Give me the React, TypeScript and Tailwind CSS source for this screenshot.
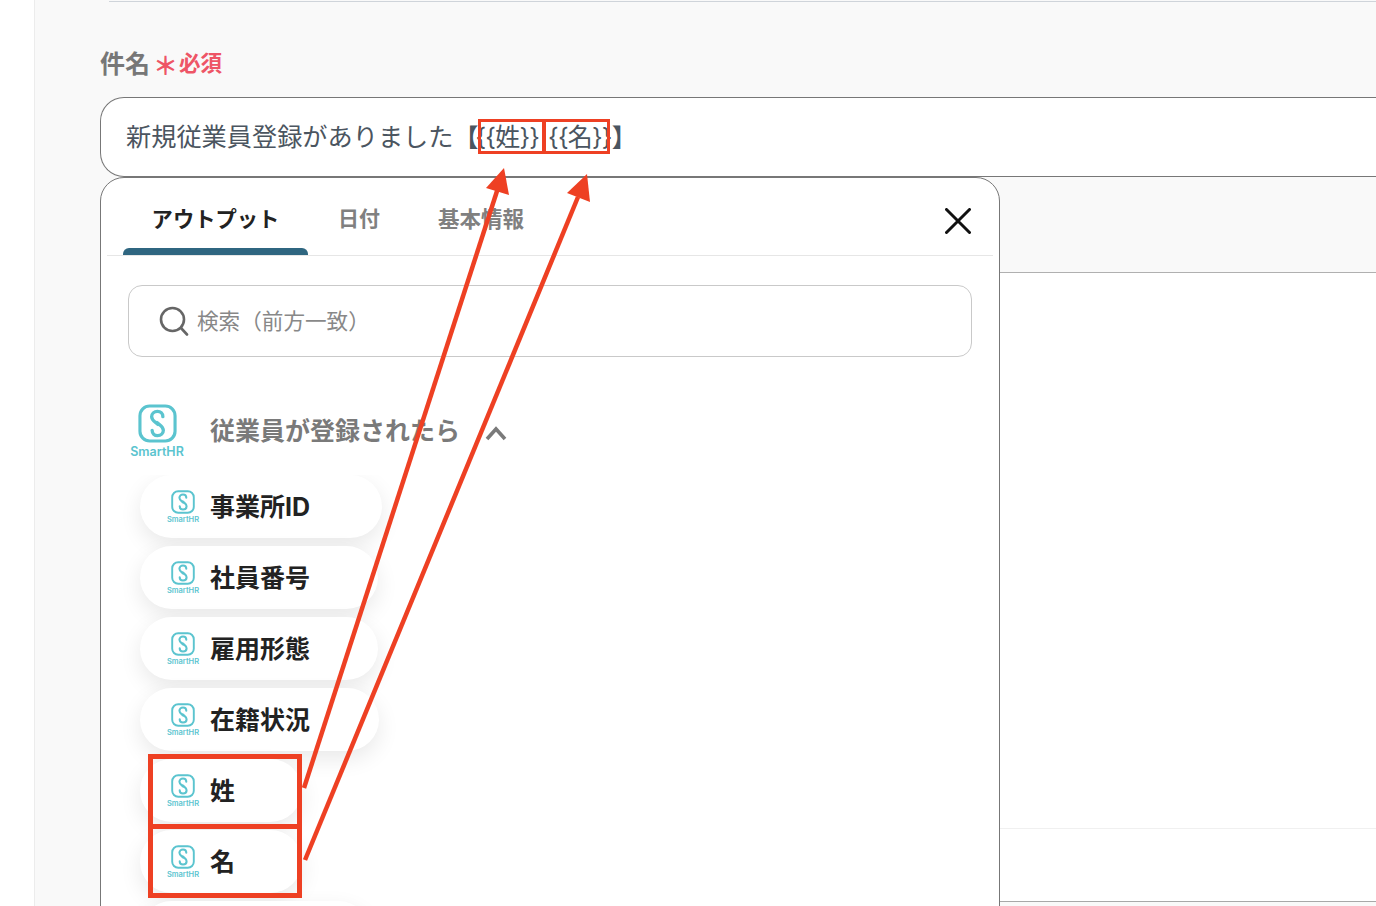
const JP = "font-['Noto_Sans_CJK_JP','Noto_Sans',sans-serif]";

function Logo({ big }: { big?: boolean }) {
  const s = big ? 39 : 24;
  return (
    <div className={big ? "flex w-[54px] flex-col items-center" : "flex w-[34px] flex-col items-center"}>
      <svg width={s} height={s} viewBox="0 0 40 40" fill="none" stroke="#5bc4cf">
        <rect x="2" y="2" width="36" height="36" rx="10" strokeWidth="3.2" />
        <path d="M25.5 13 C25.5 9.5 23 7.5 20 7.5 C16.5 7.5 14 10 14 13 C14 15.5 15.5 17 18 19 L20.5 21" strokeWidth="3.4" strokeLinecap="round" />
        <path d="M14.5 27 C14.5 30.5 17 32.5 20 32.5 C23.5 32.5 26 30 26 27 C26 24.5 24.5 23 22 21 L19.5 19" strokeWidth="3.4" strokeLinecap="round" />
      </svg>
      <span
        className={
          big
            ? "mt-[1px] font-['Inter',sans-serif] text-[12.5px] leading-[15px] font-semibold whitespace-nowrap text-[#5bc4cf]"
            : "mt-[1px] font-['Inter',sans-serif] text-[7.5px] leading-[9px] font-semibold whitespace-nowrap text-[#5bc4cf]"
        }
      >
        SmartHR
      </span>
    </div>
  );
}

function Pill({ label, width }: { label: string; width: string }) {
  return (
    <div
      className={`flex h-[63px] shrink-0 items-center gap-[10px] rounded-[32px] bg-white pl-[26px] shadow-[0_8px_22px_rgba(0,0,0,0.09)] ${width}`}
    >
      <Logo />
      <span className="mt-[1px] font-['Inter','Noto_Sans_CJK_JP',sans-serif] text-[25px] leading-none font-bold text-[#222]">{label}</span>
    </div>
  );
}

export default function App() {
  return (
    <div className={`relative flex h-[906px] w-[1376px] overflow-hidden bg-white ${JP}`}>
      <div className="w-[34px] shrink-0" />
      <main className="flex min-w-0 flex-1 flex-col border-l border-[#ececec] bg-[#f9f9f9] pl-[65px]">
        <div className="ml-[9px] h-[2px] w-[1400px] shrink-0 border-b border-[#cfd4da]" />
        <div className="mt-[42px] flex h-[36px] shrink-0 items-center">
          <span className="text-[25px] leading-none font-bold text-[#777]">件名</span>
          <span className="mt-[5px] ml-[3px] text-[25px] leading-none font-bold text-[#ee5566]">＊</span>
          <span className="ml-[1px] text-[21.5px] leading-none font-bold text-[#ee5566]">必須</span>
        </div>
        <div className="mt-[17px] flex h-[80px] w-[1400px] shrink-0 items-center rounded-l-[24px] border border-r-0 border-[#777] bg-white pb-[2px] pl-[25px] text-[25px] leading-none whitespace-nowrap text-[#4b5560]">
          <span className="text-[25.2px]">新規従業員登録がありました</span>
          <span className="font-bold tracking-[-3px]">【</span>
          <span className="mt-[2px] font-['Inter','Noto_Sans_CJK_JP',sans-serif] tracking-[-0.8px]">{"{{"}姓{"}}"}</span>
          <span className="mt-[2px] ml-[9px] font-['Inter','Noto_Sans_CJK_JP',sans-serif] tracking-[-0.8px]">{"{{"}名{"}}"}</span>
          <span className="font-bold">】</span>
        </div>
        <div className="h-[96px] shrink-0 border-b border-[#b0b0b0]" />
        <div className="h-[556px] shrink-0 border-b border-[#f0f0f0] bg-white" />
        <div className="h-[73px] shrink-0 border-b border-[#a8a8a8] bg-white" />
      </main>

      {/* popup */}
      <section className="absolute top-[177px] left-[100px] flex h-[760px] w-[900px] flex-col rounded-t-[24px] border border-[#777] bg-white">
        <div className="mx-[6px] flex h-[78px] shrink-0 border-b border-[#e6e6e6]">
          <div className="ml-[16px] flex h-[77px] w-[185px] flex-col items-center justify-end">
            <span className="text-[21.3px] leading-none font-bold whitespace-nowrap text-[#222]">アウトプット</span>
            <div className="mt-[20px] h-[7px] w-full rounded-t-[6px] bg-[#2f6680]" />
          </div>
          <span className="mt-[29px] ml-[30px] text-[21px] leading-none font-bold whitespace-nowrap text-[#808080]">日付</span>
          <span className="mt-[29px] ml-[58px] text-[21.5px] leading-none font-bold whitespace-nowrap text-[#808080]">基本情報</span>
          <svg className="mt-[30px] mr-[22px] ml-auto" width="26" height="26" viewBox="0 0 26 26" stroke="#111" strokeWidth="3" strokeLinecap="round">
            <path d="M1.5 1.5 L24.5 24.5 M24.5 1.5 L1.5 24.5" />
          </svg>
        </div>
        <div className="mx-[27px] mt-[29px] flex h-[72px] shrink-0 items-center rounded-[14px] border border-[#c9c9c9] pl-[30px]">
          <svg width="30" height="30" viewBox="0 0 30 30" fill="none" stroke="#666" strokeWidth="2.6" strokeLinecap="round">
            <circle cx="13.5" cy="13.5" r="11.5" />
            <path d="M22 22 L28 28.5" />
          </svg>
          <span className="mb-[2px] ml-[8px] text-[21.6px] leading-none whitespace-nowrap text-[#888]">検索（前方一致）</span>
        </div>
        <div className="mt-[47px] flex h-[56px] shrink-0 items-start pl-[29px]">
          <Logo big />
          <span className="mt-[13px] ml-[26px] text-[25px] leading-none font-bold whitespace-nowrap text-[#7a7a7a]">従業員が登録されたら</span>
          <svg className="mt-[21px] ml-[25px]" width="22" height="16" viewBox="0 0 22 16" fill="none" stroke="#7a7a7a" strokeWidth="3.6">
            <path d="M2 14 L11 4 L20 14" />
          </svg>
        </div>
        <div className="mt-[15px] flex min-h-0 flex-1 flex-col gap-[8px] overflow-hidden pb-[20px] pl-[39px]">
          <Pill label="事業所ID" width="w-[242px]" />
          <Pill label="社員番号" width="w-[238px]" />
          <Pill label="雇用形態" width="w-[238px]" />
          <Pill label="在籍状況" width="w-[239px]" />
          <Pill label="姓" width="w-[162px]" />
          <Pill label="名" width="w-[162px]" />
          <div className="h-[63px] w-[230px] shrink-0 rounded-[32px] bg-white shadow-[0_8px_22px_rgba(0,0,0,0.09)]" />
        </div>
      </section>

      {/* annotations */}
      <div className="absolute top-[119px] left-[478px] h-[35px] w-[67px] border-[3px] border-[#ee4023]" />
      <div className="absolute top-[119px] left-[543px] h-[35px] w-[67px] border-[3px] border-[#ee4023]" />
      <div className="absolute top-[754px] left-[148px] h-[75px] w-[154px] border-[5px] border-[#ee4023]" />
      <div className="absolute top-[824px] left-[148px] h-[74px] w-[154px] border-[5px] border-[#ee4023]" />
      <svg className="absolute top-0 left-0" width="1376" height="906" fill="none">
        <path d="M304 788 L498 188" stroke="#ee4023" strokeWidth="4.5" />
        <path d="M504 168 L486 188 L509 195 Z" fill="#ee4023" />
        <path d="M305 860 L578 197" stroke="#ee4023" strokeWidth="4.5" />
        <path d="M587 174 L567 193 L590 202 Z" fill="#ee4023" />
      </svg>
    </div>
  );
}
